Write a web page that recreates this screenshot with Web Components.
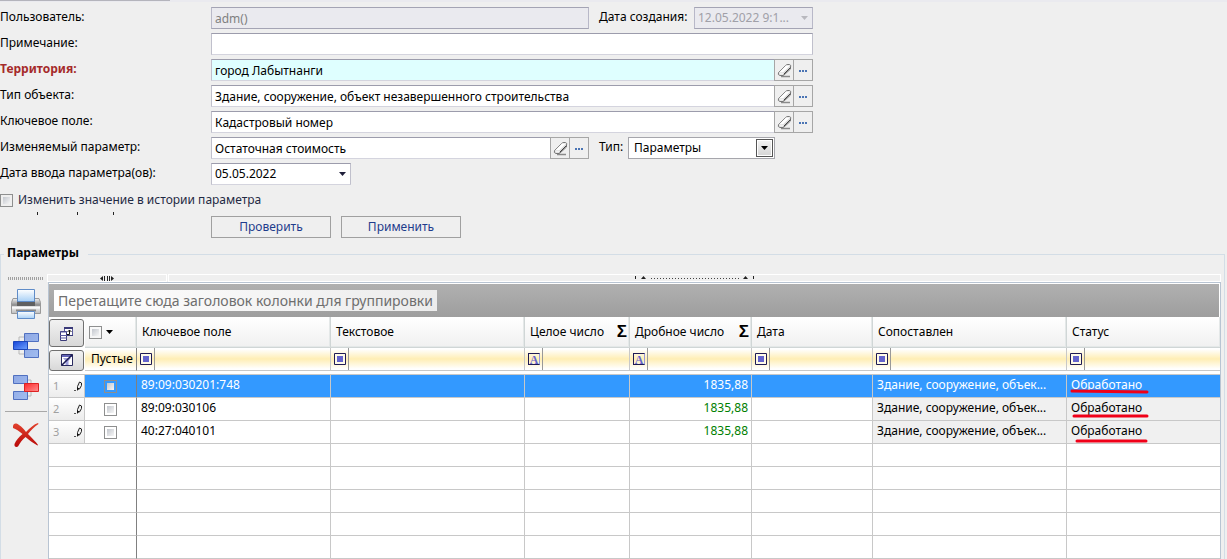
<!DOCTYPE html>
<html lang="ru">
<head>
<meta charset="utf-8">
<title>Параметры</title>
<style>
  body { margin: 0; background: #efefef; font: 12px/18px "Noto Sans", "Open Sans", sans-serif; color: #000; }
</style>
</head>
<body>
<param-page></param-page>
<script>
const define = (name, html, setup) => {
  const tpl = document.createElement('template');
  tpl.innerHTML = html;
  customElements.define(name, class extends HTMLElement {
    connectedCallback() {
      if (this.shadowRoot) return;
      this.attachShadow({ mode: 'open' }).append(tpl.content.cloneNode(true));
      if (setup) setup(this, this.shadowRoot);
    }
  });
};

/* ---------- icons ---------- */
const ICONS = {
  eraser: [15, 15, `<path d="M4 13.500h9" stroke="#8a8a8a" stroke-width="1.500"/><path d="M1.500 9.500 8.500 2.500Q9.500 1.500 11 1.500h1.500Q14.500 2 13.500 4.500V6L6.500 12.500H3Q.5 12 1.500 9.500z" fill="#dcdcdc" stroke="#777"/><path d="M2.500 9 9 2.500h4L6.500 9z" fill="#fff"/><path d="M13.500 4.500 6.500 11.500" stroke="#444"/><path d="M2.500 9.500h4v2h-4z" fill="#f2f2f2"/>`],
  dots: [9, 6, `<path d="M0 3h2v2H0zM3 3h2v2H3zM6 3h2v2H6z" fill="#4a74b4"/>`],
  arrow: [9, 5, `<path d="M1 0h7L4.500 4z" fill="currentColor"/>`],
  hsplit: [14, 5, `<path d="M0 2.500 3 0v5zM14 2.500 11 0v5z" fill="#222"/><path d="M4 0h1v5H4zM7 0h1v5H7zM9 0h1v5H9z" fill="#222"/>`],
  vsplit: [120, 4, `<path d="M0 0h1v3H0zM118 0h1v3h-1z" fill="#222"/><path d="M6 3 8.500 0 11 3zM108 3l2.500-3L113 3z" fill="#222"/><path d="M16 2.500h90" stroke="#444" stroke-dasharray="1 2"/>`],
  grip: [36, 4, `<path d="M0 1.500h36" stroke="#a0a0a0" stroke-width="3" stroke-dasharray="1 1"/>`],
  printer: [32, 32, `<defs><linearGradient id="a" x2="0" y2="1"><stop stop-color="#f4f4f4"/><stop offset=".45" stop-color="#888"/><stop offset=".6" stop-color="#eee"/><stop offset="1" stop-color="#bbb"/></linearGradient><linearGradient id="b" x2="0" y2="1"><stop stop-color="#fff"/><stop offset="1" stop-color="#a8d0f6"/></linearGradient></defs>
    <path d="M3 10.500h26l1.500 4v11h-29v-11z" fill="url(#a)" stroke="#999"/><path d="M7 11h18v6H7z" fill="#555"/><path d="M7.500 1.500h17v12h-17z" fill="url(#b)" stroke="#5f8cc8"/><path d="M7 14h18v4H7z" fill="#606060"/><path d="M2 19.500h28" stroke="#fafafa" stroke-width="2"/><path d="M6 22.500h20" stroke="#888" stroke-width="2"/><path d="M7.500 23.500h17v7h-17z" fill="url(#b)" stroke="#5f8cc8"/>`],
  nodes: [28, 28, `<defs><linearGradient id="a" x2="1" y2="1"><stop stop-color="#8fa8e4"/><stop offset="1" stop-color="#a0bcf0"/></linearGradient><linearGradient id="b" x2="1" y2="1"><stop stop-color="#1544d8"/><stop offset="1" stop-color="#6ea2ff"/></linearGradient></defs><path d="M12 5H7v17h5" fill="none" stroke="#b8b8b8"/><path d="M12.500 1.500h14v8h-14zM12.500 17.500h14v8h-14z" fill="url(#a)" stroke="#5070c0"/><path d="M1.500 9.500h14v8h-14z" fill="url(#b)" stroke="#1c46bb"/>`],
  nodesdel: [28, 28, `<defs><linearGradient id="a" x2="1" y2="1"><stop stop-color="#8fa8e4"/><stop offset="1" stop-color="#a0bcf0"/></linearGradient><linearGradient id="b" x2="1" y2="1"><stop stop-color="#ff2828"/><stop offset="1" stop-color="#ff9090"/></linearGradient></defs><path d="M15 6h4v16h-4" fill="none" stroke="#b8b8b8"/><path d="M1.500 1.500h14v8h-14zM1.500 17.500h14v8h-14z" fill="url(#a)" stroke="#5070c0"/><path d="M12.500 9.500h14v8h-14z" fill="url(#b)" stroke="#d22"/>`],
  cross: [28, 26, `<defs><linearGradient id="a" x2="0" y2="1"><stop stop-color="#e2432e"/><stop offset="1" stop-color="#b80808"/></linearGradient></defs><path d="M1 4C2 1 4 1 7 3c3 2 5 4 7 7 4-4 8-8 12-9l.5 1C22 5 19 8 16 12c4 4 8 8 10 11l-.5.5C21 21 17 18 13.500 15 10 18 8 21 6 24.500c-2 1-4 0-3.500-2.500C4 18 7 15 10.500 12 7 9 4 7 1 6z" fill="url(#a)"/>`],
  columns: [15, 15, `<path d="M5.500 1.500h8v8h-8z" fill="#fff" stroke="#5a5aa0"/><path d="M5 2h9" stroke="#3a3a78" stroke-width="2"/><path d="M1.500 5.500h6v9h-6z" fill="#fff" stroke="#3a3a78"/><path d="M1 6h7M1 9.500h7M1 12h7" stroke="#5a5aa0"/><path d="M8 8.500h2.500V4M8.500 6l2-2 2 2" fill="none" stroke="#111"/><path d="M8 9.500h6" stroke="#3a3a78"/>`],
  clearfilter: [14, 12, `<path d="M1.500.5h11v11h-11z" fill="#fff" stroke="#2a2a60"/><path d="M2 2h10" stroke="#6464b8" stroke-width="2"/><path d="M3 4h8L8.500 7v4h-3V7z" fill="#a0a0dc"/><path d="M1.500 11.500 12.500.5" stroke="#1a1a50" stroke-width="1.500"/>`],
  box: [12, 12, `<path d="M.5.5h11v11H.5z" fill="#fffbe8" stroke="#1f1b55"/><path d="M3 3h6v6H3z" fill="#6464cc"/>`],
  pencil: [9, 12, `<path d="M0 10.500h2" stroke="#555"/><path d="M3.500 9V6.500l2-4.500L7.500 3v2.500l-2 3.500z" fill="#eee" stroke="#222"/><path d="M3 8h2.500L3 11z" fill="#111"/>`],
};
define('ui-icon', `<style>:host{display:block;flex:none}svg{display:block}</style>`, (host, root) => {
  const [w, h, body] = ICONS[host.getAttribute('name')];
  root.innerHTML += `<svg width="${w}" height="${h}" viewBox="0 0 ${w} ${h}" aria-hidden="true">${body}</svg>`;
});

/* ---------- tick box ---------- */
define('tick-box', `
<style>
  :host { display: block; color: #1f2a44; }
  label { display: flex; align-items: center; gap: 5px; }
  input { appearance: none; flex: none; box-sizing: border-box; width: 13px; height: 13px; margin: 0; border: 1px solid #8e8f8f;
    background: linear-gradient(135deg, #c3c7ce, #f6f6f6) content-box #f4f4f4; padding: 2px; }
</style>
<label><input type="checkbox"><slot></slot></label>`, (host, root) => {
  if (host.hasAttribute('name')) root.querySelector('input').setAttribute('aria-label', host.getAttribute('name'));
});

/* ---------- labelled field ---------- */
define('form-field', `
<style>
  :host { display: flex; height: 22px; --label: 211px; }
  label { width: var(--label); flex: none; line-height: 20px; white-space: nowrap; }
  :host([required]) label { color: #a52a2a; font-weight: bold; }
  .box { flex: 1; min-width: 0; display: grid; }
  .box > * { grid-area: 1 / 1; }
  input, select { appearance: none; box-sizing: border-box; width: 100%; min-width: 0; height: 22px; margin: 0; padding: 0 3px;
    border: 1px solid; border-color: #9c9cac #c0c0cc #d4d4de #c0c0cc; border-radius: 0;
    background: #fff; color: #000; font: inherit; }
  :host([required]) input { background: #dfffff; }
  input:disabled { background: #eaeaef; color: #808080; border-color: #a4a4b4 #b8b8c8; opacity: 1; }
  select:disabled { background: #eaeaef; color: #a0a0a8; border-color: #a4a4b4 #b8b8c8; opacity: 1; }
  ui-icon.arrow { justify-self: end; align-self: center; margin-right: 4px; color: #1f1f3a; pointer-events: none; }
  :host([off]) ui-icon.arrow { color: #b8b8be; }
  :host([boxed]) select { border-color: #a6a6ac; padding-left: 5px; }
  .drop { justify-self: end; align-self: center; box-sizing: border-box; width: 17px; height: 18px; margin-right: 2px; pointer-events: none;
    border: 1px solid #555; background: linear-gradient(#f4f4f4, #d4d4d4); box-shadow: inset 0 0 0 1px #fff; display: grid; place-items: center; }
  button { width: 20px; height: 22px; box-sizing: border-box; margin: 0 0 0 -1px; padding: 0; border: 1px solid #a6a6a6; background: #efefef;
    display: grid; place-items: center; }
</style>
<label for="c"></label><div class="box"></div>`, (host, root) => {
  const get = n => host.getAttribute(n) || '';
  const off = host.hasAttribute('off') ? 'disabled' : '';
  root.querySelector('label').textContent = get('label');
  root.querySelector('.box').innerHTML = get('kind') === 'select'
    ? `<select id="c" ${off}><option>${get('value')}</option></select>` +
      (host.hasAttribute('boxed') ? '<span class="drop"><ui-icon name="arrow"></ui-icon></span>' : '<ui-icon class="arrow" name="arrow"></ui-icon>')
    : `<input id="c" type="text" value="${get('value')}" ${off}>`;
  if (get('kind') === 'lookup') root.querySelector('.box').insertAdjacentHTML('afterend',
    `<button type="button" aria-label="Очистить"><ui-icon name="eraser"></ui-icon></button><button type="button" aria-label="Выбрать"><ui-icon name="dots"></ui-icon></button>`);
});

define('push-button', `
<style>
  :host { display: block; width: 120px; }
  button { width: 100%; height: 22px; box-sizing: border-box; margin: 0; padding: 0; border: 1px solid #a0a0a0; background: #efefef; color: #1e3c8c; font: inherit; }
</style><button type="button"><slot></slot></button>`);

/* ---------- upper form ---------- */
define('param-form', `
<style>
  :host { display: block; }
  .top { height: 2px; background: #eaeaef; }
  .top div { width: 170px; height: 1px; background: #b4b4bc; }
  form { width: min(100%, 813px); padding-top: 5px; display: flex; flex-direction: column; gap: 4px; }
  .row { display: flex; gap: 10px; }
  .a { width: 589px; }
  .date { width: 351px; }
  .made { --label: 95px; flex: 1; }
  .type { --label: 29px; width: 176px; }
  tick-box { margin-top: 2px; height: 18px; }
  svg { display: block; margin-top: -1px; }
  .actions { display: flex; gap: 10px; padding-left: 211px; margin-top: -3px; }
</style>
<div class="top"><div></div></div>
<form>
  <div class="row"><form-field class="a" label="Пользователь:" value="adm()" off></form-field>
    <form-field class="made" kind="select" label="Дата создания:" value="12.05.2022 9:1..." off></form-field></div>
  <form-field label="Примечание:"></form-field>
  <form-field kind="lookup" label="Территория:" value="город Лабытнанги" required></form-field>
  <form-field kind="lookup" label="Тип объекта:" value="Здание, сооружение, объект незавершенного строительства"></form-field>
  <form-field kind="lookup" label="Ключевое поле:" value="Кадастровый номер"></form-field>
  <div class="row"><form-field class="a" kind="lookup" label="Изменяемый параметр:" value="Остаточная стоимость"></form-field>
    <form-field class="type" kind="select" boxed label="Тип:" value="Параметры"></form-field></div>
  <form-field class="date" kind="select" label="Дата ввода параметра(ов):" value="05.05.2022"></form-field>
  <tick-box>Изменить значение в истории параметра</tick-box>
  <svg width="120" height="3" aria-hidden="true"><path d="M37 0h1v3h-1zM77 0h1v3h-1zM113 0h1v3h-1z" fill="#222"/></svg>
  <div class="actions"><push-button>Проверить</push-button><push-button>Применить</push-button></div>
</form>`);

/* ---------- side toolbar ---------- */
define('side-tools', `
<style>
  :host { display: flex; flex-direction: column; align-items: center; width: 43px; box-sizing: border-box; padding-top: 3px; }
  button { border: 0; background: none; padding: 0; margin: 0; display: grid; place-items: center; width: 36px; height: 42px; }
  button:first-of-type { margin-top: 2px; }
  hr { width: 42px; margin: 2px 0; border: 0; border-top: 1px solid #a8a8a8; }
</style>
<ui-icon name="grip"></ui-icon>
<button type="button" aria-label="Печать"><ui-icon name="printer"></ui-icon></button>
<button type="button" aria-label="Добавить"><ui-icon name="nodes"></ui-icon></button>
<button type="button" aria-label="Исключить"><ui-icon name="nodesdel"></ui-icon></button>
<hr>
<button type="button" aria-label="Удалить"><ui-icon name="cross"></ui-icon></button>`);

/* ---------- data grid ---------- */
define('data-grid', `
<style>
  :host { display: block; margin-left: 1px; border: 1px solid #b8c4d2; border-bottom: 0; background: #fff; padding-top: 1px; }
  .group { height: 33px; margin-right: 1px; box-sizing: border-box; background: linear-gradient(#b0b0b0, #9e9e9e); padding: 6px 5px; }
  .group span { display: inline-block; height: 21px; padding: 0 4px; background: linear-gradient(90deg, #fff, #ececec);
    color: #6e6e6e; font-size: 14px; line-height: 21px; white-space: nowrap; }
  table { width: 100%; table-layout: fixed; border-collapse: separate; border-spacing: 0; }
  th, td { box-sizing: border-box; padding: 0 4px; border: 0 solid #c8c8c8; border-width: 0 1px 1px 0; font-weight: normal; text-align: left;
    white-space: nowrap; overflow: hidden; text-overflow: ellipsis; line-height: 18px; }
  tr > :last-child { border-right: 0; }
  tr > :nth-child(2) { border-right-color: #808080; }
  .head th { height: 31px; padding: 0 2px 0 5px; background: linear-gradient(#fff, #f0f0f0); border-color: #d0d6d6; box-shadow: inset -1px 0 #e4e8e8, inset 0 -1px #e4e8e8; }
  .head div { display: flex; align-items: center; justify-content: space-between; }
  .sum { font: bold 17px/18px "Liberation Sans", sans-serif; }
  .head th:nth-child(2) { padding-left: 4px; }
  .head .pick { justify-content: flex-start; gap: 3px; }
  .filter th { height: 23px; padding: 0 3px; background: linear-gradient(#fff 5%, #ffeeb4 50%, #fff 95%); }
  .filter th:nth-child(2) { padding: 0 0 0 6px; text-overflow: clip; }
  .filter div { display: flex; align-items: center; height: 22px; width: 14px; border-right: 1px solid #999; }
  .num { box-sizing: border-box; width: 12px; height: 12px; border: 1px solid; border-color: #1f1b55 #9a9ad8 #1f1b55 #1f1b55; color: #6464cc;
    font: bold 12px/12px "Liberation Serif", serif; text-align: center; }
  tr > th.corner { padding: 1px 1px 0 0; background: #fff; border: 0; box-shadow: none; }
  .corner button { box-sizing: border-box; width: 100%; height: 28px; margin: 0; padding: 0; border: 1px solid #707070; border-radius: 3px;
    background: linear-gradient(#f2f2f2, #d8d8d8); display: grid; place-items: center; }
  .filter .corner button { height: 21px; }
  .gap td { height: 4px; border-right: 0; }
  .data td { height: 23px; padding-bottom: 2px; }
  .data td:first-child { background: linear-gradient(#fff, #ececec); color: #a0a0a0; font-size: 11px; padding: 0 1px 0 4px; }
  .data td:first-child div { display: flex; justify-content: space-between; align-items: center; }
  .data td:nth-child(2) { padding-bottom: 0; }
  .data td:nth-child(2) tick-box { width: 13px; margin: 0 auto; }
  .data td:nth-child(6) { color: #008000; text-align: right; padding-right: 3px; }
  .data td:nth-child(n+8) { background: #f0f0f0; }
  .data td:last-child { position: relative; }
  .data svg { position: absolute; left: 0; top: 0; }
  .data.sel td:nth-child(n+2) { background: #3399ff; color: #fff; }
  .blank td { height: 23px; }
  .blank td:first-child { border-right: 0; }
</style>
<div class="group"><span>Перетащите сюда заголовок колонки для группировки</span></div>
<table>
  <colgroup></colgroup><thead></thead><tbody></tbody>
</table>`, (host, root) => {
  const widths = [36, 52, 194, 194, 105, 122, 121, 194, 0];
  const cols = [['Ключевое поле'], ['Текстовое'], ['Целое число', 1], ['Дробное число', 1], ['Дата'], ['Сопоставлен'], ['Статус']];
  const rows = [
    ['89:09:030201:748', 'M5 16 80 17'],
    ['89:09:030106', 'M7 18H80'],
    ['40:27:040101', 'M10 20H79'],
  ];
  root.querySelector('colgroup').innerHTML = widths.map(w => `<col${w ? ` style="width:${w}px"` : ''}>`).join('');
  root.querySelector('thead').innerHTML =
    `<tr class="head"><th class="corner"><button type="button" aria-label="Колонки"><ui-icon name="columns"></ui-icon></button></th>
     <th><div class="pick"><tick-box name="Выбрать все"></tick-box><ui-icon name="arrow"></ui-icon></div></th>` +
    cols.map(([t, s]) => `<th><div>${t}${s ? '<span class="sum">Σ</span>' : ''}</div></th>`).join('') + `</tr>
     <tr class="filter"><th class="corner"><button type="button" aria-label="Сбросить фильтр"><ui-icon name="clearfilter"></ui-icon></button></th><th>Пустые</th>` +
    cols.map(([t, s]) => `<th><div>${s ? '<span class="num">A</span>' : '<ui-icon name="box"></ui-icon>'}</div></th>`).join('') + `</tr>`;
  root.querySelector('tbody').innerHTML = `<tr class="gap"><td colspan="9"></td></tr>` +
    rows.map(([key, mark], i) => `<tr class="data${i ? '' : ' sel'}"><td><div>${i + 1}<ui-icon name="pencil"></ui-icon></div></td>
      <td><tick-box name="Строка ${i + 1}"></tick-box></td><td>${key}</td><td></td><td></td><td>1835,88</td><td></td>
      <td>Здание, сооружение, объек...</td>
      <td>Обработано<svg width="90" height="23" aria-hidden="true"><path d="${mark}" stroke="#f00018" stroke-width="3" stroke-linecap="round"/></svg></td></tr>`).join('') +
    `<tr class="blank">${'<td></td>'.repeat(9)}</tr>`.repeat(5);
});

/* ---------- lower section ---------- */
define('param-section', `
<style>
  :host { display: block; margin: 6px 2px 0 0; }
  fieldset { margin: 0; padding: 0; border: 1px solid #d3dde6; border-bottom: 0; min-width: 0; }
  legend { margin-left: 3px; padding: 0 9px 0 3px; font-weight: bold; line-height: 17px; height: 20px; }
  .body { display: flex; padding: 10px 3px 0; }
  side-tools { flex: none; }
  .main { flex: 1; min-width: 0; }
  .split { display: flex; gap: 1px; }
  .split div { box-sizing: border-box; height: 8px; border: 1px solid #fff; display: flex; justify-content: center; align-items: center; }
  .split div:first-child { width: 120px; flex: none; }
  .split div:last-child { flex: 1; }
</style>
<fieldset><legend>Параметры</legend>
  <div class="body"><side-tools></side-tools>
    <div class="main"><div class="split"><div><ui-icon name="hsplit"></ui-icon></div><div><ui-icon name="vsplit"></ui-icon></div></div>
    <data-grid></data-grid></div></div>
</fieldset>`);

define('param-page', `
<style>:host { display: block; height: 100vh; overflow: hidden; }</style>
<param-form></param-form><param-section></param-section>`);
</script>
</body>
</html>
